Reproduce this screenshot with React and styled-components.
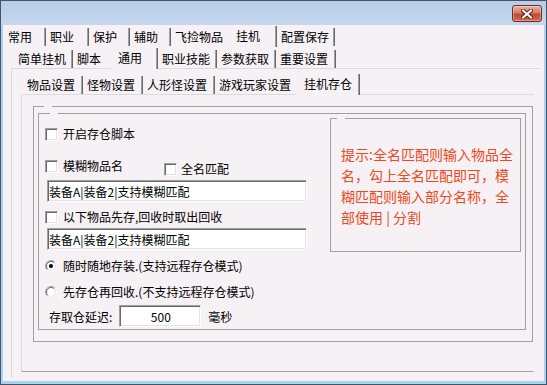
import React from 'react';
import styled, { createGlobalStyle } from 'styled-components';

const BG = '#f6f1f5';
const SHADOW = '#a0a0a0';
const DARK = '#696969';
const FRAME = '#a9d3f1';
const FONT = `"Noto Sans CJK SC", "Noto Sans", sans-serif`;

const GlobalStyle = createGlobalStyle`
  html, body {
    margin: 0;
    padding: 0;
    background: ${BG};
  }
  body {
    font-family: ${FONT};
    font-size: 12px;
    color: #000;
  }
`;

const Window = styled.div`
  width: 547px;
  height: 385px;
  box-sizing: border-box;
  display: flex;
  flex-direction: column;
  border: 1px solid #44546a;
  overflow: hidden;
`;

const TitleBar = styled.div`
  height: 24px;
  flex-shrink: 0;
  display: flex;
  align-items: flex-start;
  background: linear-gradient(to bottom, #b7cce6, #c5d8ee);
`;

const CloseButton = styled.div`
  margin: 4px 4px 0 auto;
  width: 30px;
  height: 17px;
  box-sizing: border-box;
  border: 1px solid #6b2e24;
  border-radius: 3px;
  background: linear-gradient(to bottom, #eab4a4 0%, #d67a62 45%, #c24b31 55%, #cf6a4c 100%);
  box-shadow: inset 0 0 0 1px rgba(255, 255, 255, 0.35);
  display: flex;
  align-items: center;
  justify-content: center;
`;

const Client = styled.div`
  flex: 1;
  display: flex;
  flex-direction: column;
  min-height: 0;
  background: ${BG};
  border: solid ${FRAME};
  border-width: 0 2px 3px 2px;
  padding: 3px 0 0 1px;
`;

/* tab control: a row of tabs over its pane */
const TabControl = styled.div`
  flex: 1;
  display: flex;
  flex-direction: column;
  min-height: 0;
`;

const TabRow = styled.div`
  display: flex;
  height: 18px;
  margin-left: ${p => p.$indent}px;
  flex-shrink: 0;
`;

const Tab = styled.div`
  position: relative;
  box-sizing: border-box;
  width: ${p => (p.$active ? p.$w + 2 : p.$w)}px;
  height: ${p => (p.$active ? 21 : 18)}px;
  margin-top: ${p => (p.$active ? -2 : 0)}px;
  margin-left: ${p => (p.$active ? -2 : 0)}px;
  padding-left: ${p => (p.$active ? 7 : 4)}px;
  line-height: ${p => (p.$active ? 19 : 18)}px;
  white-space: nowrap;
  background: ${BG};
  border-right: 1px solid ${DARK};
  box-shadow: inset -1px 0 0 ${SHADOW};
  z-index: ${p => (p.$active ? 2 : 1)};
`;

const Pane = styled.div`
  flex: 1;
  display: flex;
  flex-direction: column;
  min-height: 0;
  border-style: solid;
  border-width: 1px;
  border-color: ${p => p.$light} transparent ${p => p.$bottom} ${p => p.$light};
  padding: ${p => p.$pad};
`;

/* group boxes with an empty caption gap */
const Group = styled.div`
  position: relative;
  box-sizing: border-box;
  width: ${p => p.$w}px;
  height: ${p => p.$h}px;
  border: 1px solid ${SHADOW};
  flex-shrink: 0;
  &::before {
    content: '';
    position: absolute;
    top: -1px;
    left: ${p => p.$gap}px;
    width: 8px;
    height: 1px;
    background: ${BG};
  }
`;

const OuterGroup = styled(Group)`
  padding: 6px 0 0 4px;
`;

const InnerGroup = styled(Group)`
  display: flex;
  justify-content: space-between;
  align-items: flex-start;
`;

const Column = styled.div`
  display: flex;
  flex-direction: column;
  padding-left: 6px;
`;

const OptionRow = styled.div`
  display: flex;
  align-items: center;
  height: 14px;
  margin-top: ${p => p.$top}px;
  margin-left: ${p => p.$left || 0}px;
  line-height: 14px;
  white-space: nowrap;
`;

const PairRow = styled.div`
  display: flex;
  align-items: flex-start;
  height: 17px;
  margin-top: 18px;
`;

const Label = styled.span`
  margin-left: ${p => p.$gap}px;
`;

const CheckBox = styled.span`
  width: 13px;
  height: 13px;
  box-sizing: border-box;
  flex-shrink: 0;
  background: #fff;
  border: 1px solid;
  border-color: ${SHADOW} #fff #fff ${SHADOW};
  box-shadow: inset 1px 1px 0 ${DARK}, inset -1px -1px 0 #e3e3e3;
`;

const TextBox = styled.input`
  box-sizing: border-box;
  width: ${p => p.$w}px;
  height: 22px;
  margin: ${p => p.$margin};
  padding: 0 0 0 1px;
  border: 1px solid;
  border-color: ${SHADOW} #fff #fff ${SHADOW};
  box-shadow: inset 1px 1px 0 ${DARK}, inset -1px -1px 0 #e3e3e3;
  background: #fff;
  font-family: ${FONT};
  font-size: 12px;
  color: #000;
  text-align: ${p => p.$align || 'left'};
  outline: none;
`;

const DelayRow = styled.div`
  display: flex;
  align-items: center;
  height: 22px;
  margin-top: 6px;
  margin-left: 4px;
  white-space: nowrap;
`;

const HintBox = styled(Group)`
  margin: 4px 4px 0 0;
  padding: 25px 0 0 10px;
  color: #ec4a22;
  font-size: 14px;
  line-height: 21px;
  white-space: nowrap;
`;

const CloseGlyph = () => (
  <svg width="12" height="10" viewBox="0 0 12 10">
    <path d="M2 1.5 L10 8.5 M10 1.5 L2 8.5" stroke="#5a2218" strokeWidth="4" strokeLinecap="square" />
    <path d="M2 1.5 L10 8.5 M10 1.5 L2 8.5" stroke="#fff" strokeWidth="2" strokeLinecap="square" />
  </svg>
);

const RadioIcon = ({ checked }) => (
  <svg width="12" height="12" viewBox="0 0 12 12" style={{ flexShrink: 0 }}>
    <circle cx="6" cy="6" r="5.5" fill="#fff" />
    <path d="M9.9 2.1 A5.5 5.5 0 0 0 2.1 9.9" fill="none" stroke={SHADOW} strokeWidth="1" />
    <path d="M9.2 2.8 A4.5 4.5 0 0 0 2.8 9.2" fill="none" stroke={DARK} strokeWidth="1" />
    <path d="M2.8 9.2 A4.5 4.5 0 0 0 9.2 2.8" fill="none" stroke="#e3e3e3" strokeWidth="1" />
    {checked && <circle cx="6" cy="6" r="2" fill="#000" />}
  </svg>
);

const mainTabs = [
  ['常用', 42], ['职业', 43], ['保护', 41], ['辅助', 41],
  ['飞捡物品', 60], ['挂机', 46, true], ['配置保存', 58],
];

const hangTabs = [
  ['简单挂机', 59], ['脚本', 40], ['通用', 45, true],
  ['职业技能', 59], ['参数获取', 59], ['重要设置', 60],
];

const commonTabs = [
  ['物品设置', 60], ['怪物设置', 60], ['人形怪设置', 72],
  ['游戏玩家设置', 84], ['挂机存仓', 61, true],
];

const Tabs = ({ items, indent }) => (
  <TabRow $indent={indent}>
    {items.map(([name, w, active]) => (
      <Tab key={name} $w={w} $active={active}>{name}</Tab>
    ))}
  </TabRow>
);

export default function App() {
  return (
    <>
      <GlobalStyle />
      <Window>
        <TitleBar>
          <CloseButton><CloseGlyph /></CloseButton>
        </TitleBar>
        <Client>
          <TabControl>
            <Tabs items={mainTabs} indent={0} />
            <Pane $light="transparent" $bottom="transparent" $pad="3px 3px 2px 6px">
              <TabControl>
                <Tabs items={hangTabs} indent={3} />
                <Pane $light="#dcd8dc" $bottom="transparent" $pad="7px 5px 5px 9px">
                  <TabControl>
                    <Tabs items={commonTabs} indent={2} />
                    <Pane $light="#dcd8dc" $bottom={SHADOW} $pad="11px 0 0 11px">
                      <OuterGroup $w={500} $h={236} $gap={10}>
                        <InnerGroup $w={488} $h={217} $gap={11}>
                          <Column>
                            <OptionRow $top={13}>
                              <CheckBox />
                              <Label $gap={5}>开启存仓脚本</Label>
                            </OptionRow>
                            <PairRow>
                              <OptionRow $top={0}>
                                <CheckBox />
                                <Label $gap={5}>模糊物品名</Label>
                              </OptionRow>
                              <OptionRow $top={3} $left={41}>
                                <CheckBox />
                                <Label $gap={4}>全名匹配</Label>
                              </OptionRow>
                            </PairRow>
                            <TextBox $w={260} $margin="4px 0 0 2px" readOnly defaultValue="装备A|装备2|支持模糊匹配" />
                            <OptionRow $top={8}>
                              <CheckBox />
                              <Label $gap={5}>以下物品先存,回收时取出回收</Label>
                            </OptionRow>
                            <TextBox $w={260} $margin="4px 0 0 2px" readOnly defaultValue="装备A|装备2|支持模糊匹配" />
                            <OptionRow $top={9}>
                              <RadioIcon checked />
                              <Label $gap={6}>随时随地存装.(支持远程存仓模式)</Label>
                            </OptionRow>
                            <OptionRow $top={12}>
                              <RadioIcon />
                              <Label $gap={6}>先存仓再回收.(不支持远程存仓模式)</Label>
                            </OptionRow>
                            <DelayRow>
                              存取仓延迟:
                              <TextBox $w={82} $margin="0 7px 0 7px" $align="center" readOnly defaultValue="500" />
                              毫秒
                            </DelayRow>
                          </Column>
                          <HintBox $w={191} $h={134} $gap={6}>
                            提示:全名匹配则输入物品全<br />
                            名，勾上全名匹配即可，模<br />
                            糊匹配则输入部分名称，全<br />
                            部使用 | 分割
                          </HintBox>
                        </InnerGroup>
                      </OuterGroup>
                    </Pane>
                  </TabControl>
                </Pane>
              </TabControl>
            </Pane>
          </TabControl>
        </Client>
      </Window>
    </>
  );
}
